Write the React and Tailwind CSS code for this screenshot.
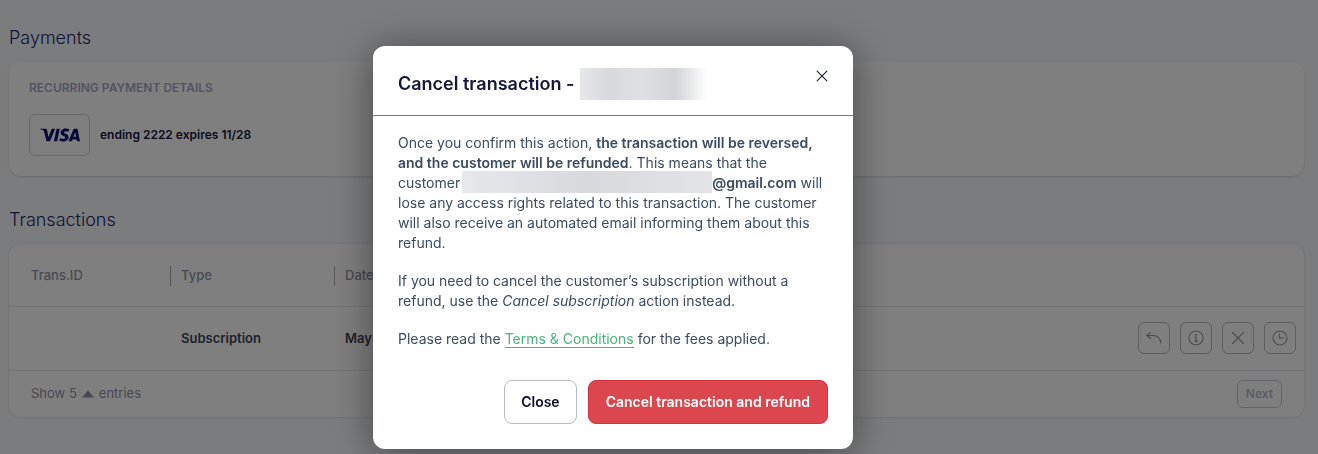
import React, { useState } from 'react';
import { SiVisa } from 'react-icons/si';

const ReplyIcon = () => (
    <svg width="18" height="18" viewBox="0 0 18 18" fill="none" stroke="currentColor" strokeWidth="1.2" strokeLinecap="round" strokeLinejoin="round" aria-hidden="true">
        <path d="M5.500 3.500 2 6.500l3.500 3" />
        <path d="M2 6.500h6c4.500 0 7.800 3 7.800 7.500" />
    </svg>
);

const InfoIcon = () => (
    <svg width="18" height="18" viewBox="0 0 18 18" fill="none" stroke="currentColor" strokeWidth="1.2" strokeLinecap="round" strokeLinejoin="round" aria-hidden="true">
        <circle cx="9" cy="9" r="7" />
        <path d="M8 8.200h1v4M8 12.300h2.200" />
        <circle cx="9" cy="5.800" r="0.400" fill="currentColor" />
    </svg>
);

const CrossIcon = ({ size = 18 }) => (
    <svg width={size} height={size} viewBox="0 0 18 18" fill="none" stroke="currentColor" strokeWidth="1.2" strokeLinecap="round" aria-hidden="true">
        <path d="m3.500 3.500 11 11M14.500 3.500l-11 11" />
    </svg>
);

const ClockIcon = () => (
    <svg width="18" height="18" viewBox="0 0 18 18" fill="none" stroke="currentColor" strokeWidth="1.2" strokeLinecap="round" strokeLinejoin="round" aria-hidden="true">
        <circle cx="9" cy="9" r="7" />
        <path d="M8.500 4.800V9h4" />
    </svg>
);

const actions = [
    { label: 'Refund', icon: <ReplyIcon /> },
    { label: 'Details', icon: <InfoIcon /> },
    { label: 'Cancel', icon: <CrossIcon /> },
    { label: 'History', icon: <ClockIcon /> },
];

const PaymentDetails = () => (
    <section>
        <h2 className="text-lg leading-6 font-light text-[#262a65]">Payments</h2>
        <div className="mt-3 rounded-xl bg-white px-5 pt-4 pb-5 shadow-sm">
            <h3 className="text-xs leading-5 font-semibold text-[#a5a8c8]">RECURRING PAYMENT DETAILS</h3>
            <div className="mt-4 flex items-center gap-2.5">
                <div className="flex h-[42px] w-[61px] items-center justify-center rounded-md border border-[#d4d5d9] text-[#0a1172]">
                    <SiVisa size={40} aria-label="Visa" />
                </div>
                <p className="text-xs font-semibold text-[#14163a]">ending 2222 expires 11/28</p>
            </div>
        </div>
    </section>
);

const Transactions = () => (
    <section className="mt-8">
        <h2 className="text-lg leading-6 font-light text-[#262a65]">Transactions</h2>
        <div className="mt-3 rounded-xl bg-white shadow-xs ring-1 ring-[#ececf0]">
            <table className="w-full table-fixed text-left">
                <thead>
                    <tr className="h-[62px] border-b border-[#e8e8ec] text-[13px] text-[#9496a4]">
                        <th className="w-[161px] pt-0.5 pl-[22px] font-medium">Trans.ID</th>
                        <th className="w-[164px] pt-0.5 font-medium">
                            <span className="block border-l border-[#b4b5bc] pl-2.5">Type</span>
                        </th>
                        <th className="pt-0.5 font-medium">
                            <span className="block border-l border-[#b4b5bc] pl-2.5">Date</span>
                        </th>
                        <th className="w-[200px]" aria-label="Actions" />
                    </tr>
                </thead>
                <tbody>
                    <tr className="h-16 border-b border-[#e8e8ec] text-[13px] font-semibold text-[#42445a]">
                        <td />
                        <td className="pt-0.5 pl-[11px]">Subscription</td>
                        <td className="pt-0.5 pl-[11px]">May</td>
                        <td className="pr-2">
                            <div className="flex justify-end gap-2.5">
                                {actions.map((action) => (
                                    <button key={action.label} aria-label={action.label} className="flex size-8 items-center justify-center rounded-md border border-[#bcbcbf] text-[#9c9ca0]">
                                        {action.icon}
                                    </button>
                                ))}
                            </div>
                        </td>
                    </tr>
                </tbody>
            </table>
            <div className="flex items-center justify-between px-[22px] py-[9px] text-[13px] text-[#8f91a3]">
                <button className="flex items-center gap-[5px]">
                    Show 5
                    <svg width="12" height="8" viewBox="0 0 12 8" fill="currentColor" aria-hidden="true">
                        <path d="M6 0.500 12 7.500H0z" />
                    </svg>
                    entries
                </button>
                <button disabled className="rounded-md border border-[#cccdd4] px-2 py-1 text-xs leading-[18px] font-semibold text-[#b8bac6]">Next</button>
            </div>
        </div>
    </section>
);

const CancelDialog = ({ onClose }) => (
    <div className="fixed inset-0 flex items-start justify-center overflow-hidden bg-black/50 pt-[46px] pr-[92px]">
        <div role="dialog" aria-modal="true" aria-labelledby="dialog-title" className="w-full max-w-[480px] rounded-xl bg-white shadow-[0_4px_40px_rgba(0,0,0,0.45)]">
            <header className="flex items-start justify-between border-b border-[#77787f] pt-[22px] pr-[23px] pb-[15px] pl-[25px]">
                <h1 id="dialog-title" className="flex items-center gap-1.5 text-lg font-semibold text-[#14163a]">
                    Cancel transaction -
                    <span className="h-8 w-32 bg-[linear-gradient(90deg,#e6e7ea_0%,#d8d9dd_22%,#dfe0e3_48%,#d3d4d8_74%,#ffffff_100%)]" />
                </h1>
                <button aria-label="Dismiss" onClick={onClose} className="text-[#14163a]">
                    <CrossIcon size={16} />
                </button>
            </header>
            <div className="px-[25px] pt-[17px] pb-[25px]">
                <div className="space-y-[18px] text-sm leading-5 text-[#3b4a60]">
                    <p>
                        Once you confirm this action, <strong className="font-semibold">the transaction will be reversed, and the customer will be refunded</strong>. This means that the customer <strong className="font-semibold"><span className="-mt-1.5 -mb-0.5 -ml-0.5 inline-block h-[22px] w-[250px] bg-linear-to-r from-[#e7e8ea] via-[#d8d9dd] to-[#e3e4e7] align-middle" />@gmail.com</strong> will lose any access rights related to this transaction. The customer will also receive an automated email informing them about this refund.
                    </p>
                    <p>
                        If you need to cancel the customer’s subscription without a refund, use the <em>Cancel subscription</em> action instead.
                    </p>
                    <p>
                        Please read the <a href="#terms" className="border-b border-[#48b577] text-[#48b577]">Terms &amp; Conditions</a> for the fees applied.
                    </p>
                </div>
                <div className="mt-[31px] flex justify-end gap-[11px]">
                    <button onClick={onClose} className="h-11 rounded-lg border border-[#b8b9c5] px-4 text-sm font-semibold text-[#0b0d26]">Close</button>
                    <button onClick={onClose} className="h-11 rounded-lg border border-[#d9303e] bg-[#dc464f] px-[17px] text-sm font-semibold text-white">Cancel transaction and refund</button>
                </div>
            </div>
        </div>
    </div>
);

const App = () => {
    const [open, setOpen] = useState(true);

    return (
        <div className="min-h-screen bg-[#f7f9fc] pt-[26px] pr-[14px] pb-9 pl-[9px] font-['Inter',sans-serif]">
            <main>
                <PaymentDetails />
                <Transactions />
            </main>
            {open && <CancelDialog onClose={() => setOpen(false)} />}
        </div>
    );
};

export default App;
